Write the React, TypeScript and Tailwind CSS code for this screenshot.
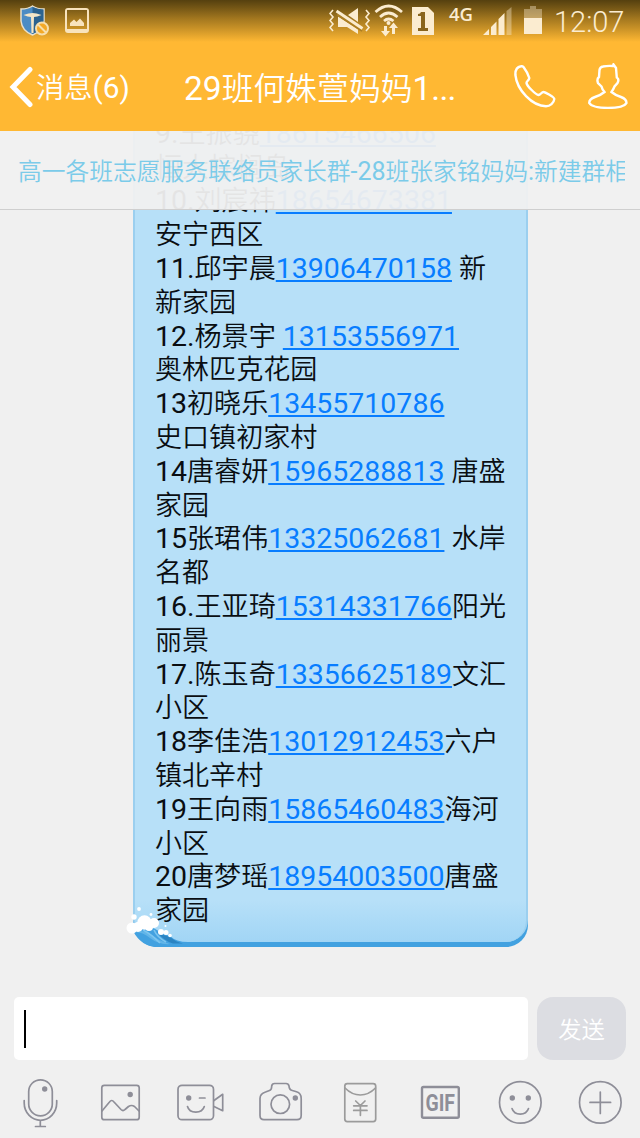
import type { ReactNode } from "react";

const messageLines: string[] = [
  "9.王振骁18615466506",
  "恒大棕榈岛",
  "10.刘宸祎18654673381",
  "安宁西区",
  "11.邱宇晨13906470158 新",
  "新家园",
  "12.杨景宇 13153556971",
  "奥林匹克花园",
  "13初晓乐13455710786",
  "史口镇初家村",
  "14唐睿妍15965288813 唐盛",
  "家园",
  "15张珺伟13325062681 水岸",
  "名都",
  "16.王亚琦15314331766阳光",
  "丽景",
  "17.陈玉奇13356625189文汇",
  "小区",
  "18李佳浩13012912453六户",
  "镇北辛村",
  "19王向雨15865460483海河",
  "小区",
  "20唐梦瑶18954003500唐盛",
  "家园",
];

// Latin runs are set a little larger than the Chinese ones
function MixedText({ text }: { text: string }) {
  const parts = text.match(/\d{11}|[\u4e00-\u9fff]+|(?:(?!\d{11})[^\u4e00-\u9fff])+/g) || [];

  return (
    <>
      {parts.map((part, index) => {
        if (/^\d{11}$/.test(part)) {
          return <a key={index} href={`tel:${part}`} className="text-[#087dff] underline decoration-2 underline-offset-[2px] [text-decoration-skip-ink:none]">{part}</a>;
        }
        if (/[\u4e00-\u9fff]/.test(part)) {
          return <span key={index} className="font-['Noto_Sans_CJK_SC',sans-serif] text-[0.95em] font-[350]">{part}</span>;
        }
        return <span key={index}>{part}</span>;
      })}
    </>
  );
}

function StatusBar() {
  return (
    <div className="flex h-[42px] items-start bg-linear-to-b from-[#55400f] via-[#a4781f] via-45% to-[#ffb833] pl-5 pt-1 text-[#fbecd0]">
      <svg width="30" height="32" viewBox="0 0 30 32">
        <path d="M1 5Q8 5 12.500 2Q17 5 24 5V17Q23 27 12.500 31Q2 27 1 17Z" fill="#4b8cc4" stroke="#e9dfc9" strokeWidth="1.500" />
        <path d="M12.500 3Q17 5 23.500 5.500V17Q22 26 12.500 30Z" fill="#2c638f" />
        <path d="M3.500 11Q9 9 12.500 9Q16 9 21.500 11Q17 13 14 13L13.500 29H11.500L11 13Q8 13 3.500 11Z" fill="#f3e6c8" />
        <circle cx="22" cy="24.500" r="6" fill="#f3a927" stroke="#f6dfae" strokeWidth="2" />
        <path d="M18 20.500L26 28.500" stroke="#f6dfae" strokeWidth="2" />
      </svg>
      <svg className="ml-[15px] mt-1" width="24" height="25" viewBox="0 0 24 25">
        <path d="M3 0H21Q24 0 24 3V22Q24 25 21 25H3Q0 25 0 22V3Q0 0 3 0ZM2 2V21H22V2Z" fill="#f8e3bd" fillRule="evenodd" />
        <path d="M5 18V15L9 11.500L11.500 14L15 10.500L19 15V18Z" fill="#f8e3bd" />
      </svg>
      <svg className="ml-[240px] mt-[3px]" width="42" height="28" viewBox="0 0 42 28" fill="none" stroke="currentColor">
        <path d="M4 3L1 6.500L4 10L1 13.500L4 17L1 20.500L4 24M37 3L40 6.500L37 10L40 13.500L37 17L40 20.500L37 24" strokeWidth="1.600" />
        <path d="M19 8L29 1V15ZM9 9.500L29 22.500V27L18 20H9Z" fill="currentColor" stroke="none" />
        <path d="M8 7.500L33 24" stroke="#ac7e22" strokeWidth="1.600" />
        <path d="M7.500 4L33.500 21.500" strokeWidth="3" />
      </svg>
      <svg className="ml-[3px]" width="30" height="33" viewBox="0 0 30 33" fill="none" stroke="currentColor">
        <path d="M1.500 8Q14.500-4 28 8M6 13Q14.500 5 23.500 13M10 17Q14.500 13 19.500 17" strokeWidth="2.700" />
        <circle cx="14.500" cy="19" r="2" fill="currentColor" stroke="none" />
        <path d="M10 22H13V27H16L11.500 32.500L7 27H10ZM18 30V24H15L19.500 18.500L24 24H21V30Z" fill="currentColor" stroke="none" />
      </svg>
      <svg className="ml-2 mt-[3px]" width="23" height="28" viewBox="0 0 23 28">
        <path d="M0 0H16L22 6V28H0Z" fill="currentColor" />
        <path d="M9 5H13V21H16V24H6V21H9V9H6V7Q8.500 7 9 5Z" fill="#8a651d" />
      </svg>
      <span className="ml-[14px] font-['Open_Sans','Noto_Sans',sans-serif] text-[18.500px] font-semibold leading-[19px]">4G</span>
      <svg className="ml-[10px] mt-[3px]" width="29" height="28" viewBox="0 0 29 28" fill="currentColor">
        <path d="M0 28L6 22V28ZM8 20L13.500 14.500V28H8ZM15.500 12L21.500 6V28H15.500Z" />
        <path d="M23.500 4L28.500 0V28H23.500Z" opacity=".4" />
      </svg>
      <svg className="ml-3 mt-[2px]" width="18" height="28" viewBox="0 0 18 28" fill="currentColor">
        <path d="M0 3H6V0H12V3H18V12H0Z" opacity=".4" />
        <path d="M0 12H18V28H0Z" />
      </svg>
      <span className="ml-[12px] text-[29px] leading-[36px] font-light">12:07</span>
    </div>
  );
}

function Header() {
  return (
    <header className="z-10 h-[131px] shrink-0 bg-[#ffb833] text-white">
      <StatusBar />
      <div className="flex h-[89px] items-center pl-[9px]">
        <svg className="shrink-0" width="25" height="42" viewBox="0 0 25 42" fill="none" stroke="currentColor" strokeWidth="5">
          <path d="M21 3.500L4 21L21 38.500" strokeLinecap="round" />
        </svg>
        <span className="ml-[2px] w-[148px] shrink-0 whitespace-nowrap pt-[2px] text-[29.800px]"><MixedText text="消息(6)" /></span>
        <h1 className="w-[276px] shrink-0 whitespace-nowrap pt-[5px] text-[33.500px] font-normal"><MixedText text="29班何姝萱妈妈1" /><span className="tracking-[-0.8px]">...</span></h1>
        <svg className="ml-[54px] shrink-0" width="42" height="43" viewBox="0 0 42 43" fill="none" stroke="currentColor" strokeWidth="2.400">
          <path d="M7 1.300C3 2 1.200 5.500 1.400 10C3 25 18 41 32 41.300C36 41.300 40 38 40.300 34C40.300 32 31 27 29.500 27C27.500 27 26.500 30 24.500 30C21 29 13 21 12.500 18C12.500 16 15 15.500 15.300 13C14.500 10 11 4 9.500 2Q8.500 1 7 1.300Z" />
        </svg>
        <svg className="ml-[32px] shrink-0" width="40" height="47" viewBox="0 0 40 47" fill="none" stroke="currentColor" strokeWidth="2.400">
          <path d="M11 14L11.500 7Q12 4 15 3.500Q20 2.500 25 3L25.500 1.500L28 5L28.800 14.500Q31.500 16 29.500 20L26.500 23.500Q25.500 26 23.500 29Q27 32 33 34Q38.500 36 38.500 40C35 46.500 5 46.500 1.200 40Q1.200 36 7 34Q13 32 16.500 29Q14 26 13.500 23.500L10 20Q8.500 16 11 14Z" />
        </svg>
      </div>
    </header>
  );
}

function Bubble() {
  return (
    <div className="relative ml-[133px] mb-[50px] w-[395px] shrink-0 rounded-b-[22px] bg-[#42a1e0]">
      <div className="rounded-b-[22px] border-x-2 border-[#9bcfef] bg-[#b7e0f8] bg-[linear-gradient(to_top,#a1d5f5_0,#b7e0f8_42px)] pl-5 pb-[16px]">
        {messageLines.map((line, index) => (
          <div key={index} className="h-[33.800px] whitespace-nowrap text-[28.500px] leading-[33.800px] text-[#0a0e12]">
            <MixedText text={line} />
          </div>
        ))}
      </div>
      <div className="h-[5px]" />
      <svg className="absolute -left-[7px] bottom-0" width="62" height="42" viewBox="0 0 62 42">
        <path d="M0 24H8Q12 38 28 42H0Z" fill="#f0f0f0" />
        <path d="M7 26Q10 21 20 22Q29 22 35 28L44 31Q50 37 62 37V42H30Q15 41 7 26Z" fill="#42a1e0" />
        <path d="M9 27Q16 24 24 29Q33 36 44 39Q33 40 24 33Q17 27 9 27Z" fill="#62b5e8" />
        <path d="M17 25Q25 29 34 38M28 25Q31 32 40 37" fill="none" stroke="#7cc5ef" strokeWidth="1.600" />
        <path d="M31 27Q38 36 47 38.500H57Q50 37 44 32Q38 31 31 27Z" fill="#2b84c2" />
        <g fill="#fff">
          <circle cx="6" cy="23" r="5.500" />
          <circle cx="8" cy="12" r="2.700" />
          <circle cx="13" cy="4" r="1.900" />
          <circle cx="18.500" cy="17.500" r="7.200" />
          <circle cx="12" cy="22" r="5" />
          <circle cx="28" cy="18" r="5" />
          <circle cx="23" cy="22" r="4" />
          <circle cx="25" cy="9.500" r="1.400" />
          <circle cx="35" cy="27" r="3" />
          <circle cx="40" cy="27.500" r="2.500" />
          <circle cx="44" cy="30.500" r="1.800" />
          <circle cx="39.500" cy="21" r="1" />
        </g>
      </svg>
    </div>
  );
}

function ToolIcon({ label, children }: { label: string, children: ReactNode }) {
  return (
    <button aria-label={label}>
      <svg width="80" height="78" viewBox="0 0 80 78" fill="none" stroke="#8e8e98" strokeWidth="1.700" strokeLinecap="round" strokeLinejoin="round">
        {children}
      </svg>
    </button>
  );
}

function Dot({ x, y }: { x: number, y: number }) {
  return <circle cx={x} cy={y} r="2.700" fill="#8e8e98" stroke="none" />;
}

function Toolbar() {
  return (
    <div className="grid h-[78px] grid-cols-8">
      <ToolIcon label="语音">
        <rect x="28.700" y="19.800" width="23.600" height="36" rx="11.800" />
        <path d="M24.200 40.500V43C24.200 53 32 60.300 40.500 60.300S56.700 53 56.700 43V40.500M40.300 60.500V66.500M35.500 66.500H45.300" />
        <Dot x={44.700} y={29} />
      </ToolIcon>
      <ToolIcon label="图片">
        <rect x="21.800" y="25.300" width="37.400" height="34.400" rx="2.500" />
        <path d="M22 51L29.500 42Q31.700 39 34 42L41 49.500Q43 51.500 45 49.500L48.500 46.500Q51.500 44.500 54.500 46.500L59 51" />
        <Dot x={50.200} y={34.500} />
      </ToolIcon>
      <ToolIcon label="视频">
        <rect x="18" y="25.300" width="35.500" height="34.400" rx="4" />
        <path d="M54 40.500L62.700 34.300V50.700L54 46.500M39.500 38H45M27.500 46.500C29.500 54 42 54 44.300 46.500" />
        <Dot x={28.700} y={38} />
      </ToolIcon>
      <ToolIcon label="拍照">
        <path d="M20 38.500C20 34.500 22.500 33 25.500 32L29.500 30.500C32 29.800 31.500 28 31.700 26C32 24.200 33 23.500 34.500 23.500H46C48 23.500 48.700 24.500 49 26C49.200 28.500 49.500 29.800 51.500 30.300L56.500 31.800C59.500 32.700 61.200 34.500 61.200 38.500V55.500Q61.200 59.600 57 59.600H24Q20 59.600 20 55.500Z" />
        <circle cx="40.300" cy="44.200" r="9.300" />
        <Dot x={55.300} y={38} />
      </ToolIcon>
      <ToolIcon label="红包">
        <g stroke="#9b9b9b">
          <rect x="24.800" y="23.600" width="30.900" height="38" rx="2.500" />
          <path d="M25 28Q32 35 40.300 35T55.500 28" />
          <path d="M35.700 41L40.400 45.500L45 41M33.700 45.800H47M33.700 50.400H47M40.400 45.800V55.300" />
        </g>
      </ToolIcon>
      <ToolIcon label="动图">
        <rect x="22" y="27" width="36.800" height="30.700" rx="1.500" strokeWidth="2.400" />
        <text x="25.500" y="51" textLength="29.500" lengthAdjust="spacingAndGlyphs" fill="#8e8e98" stroke="none" className="font-['Roboto',sans-serif] text-[24.500px] font-bold">GIF</text>
      </ToolIcon>
      <ToolIcon label="表情">
        <circle cx="40.300" cy="42.400" r="20.800" />
        <path d="M32 48.500C34.500 56 46 56 48.500 48.500" />
        <Dot x={32.300} y={38} />
        <Dot x={48.300} y={38} />
      </ToolIcon>
      <ToolIcon label="更多">
        <circle cx="40.300" cy="42.400" r="20.800" />
        <path d="M30 42.400H50.600M40.300 32V53.500" />
      </ToolIcon>
    </div>
  );
}

export default function App() {
  return (
    <div className="flex h-[1138px] w-[640px] flex-col overflow-hidden bg-[#f0f0f0] font-['Roboto','Noto_Sans_CJK_SC',sans-serif]">
      <Header />
      <main className="relative flex min-h-0 flex-1 flex-col justify-end overflow-hidden">
        <Bubble />
        <div className="absolute inset-x-0 top-0 h-[79px] border-b border-[#cfcfcf] bg-[#f0f0f0]/95 pl-[18px] pr-[15px]">
          <p className="overflow-hidden whitespace-nowrap text-[25px] leading-[78px] text-[#7bcbe9]">
            <MixedText text="高一各班志愿服务联络员家长群-28班张家铭妈妈:新建群相册" />
          </p>
        </div>
      </main>
      <footer className="shrink-0">
        <div className="flex h-[63px] gap-[9px] px-[14px]">
          <div className="flex flex-1 items-center rounded-[5px] bg-white pl-[10px]">
            <span className="h-[38px] w-[2px] bg-black" />
          </div>
          <button className="w-[89px] rounded-[16px] bg-[#dcdde2] pt-[2px] text-[24.500px] text-white"><MixedText text="发送" /></button>
        </div>
        <Toolbar />
      </footer>
    </div>
  );
}
